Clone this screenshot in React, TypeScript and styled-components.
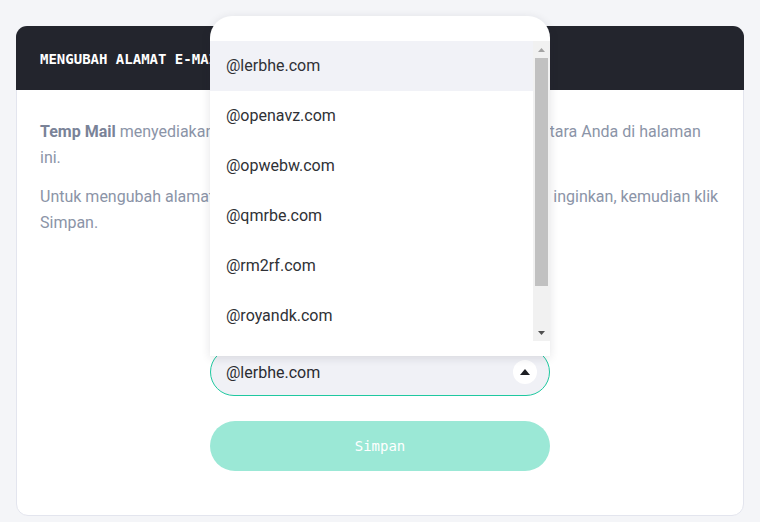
import React from 'react';
import styled, { createGlobalStyle } from 'styled-components';

const GlobalStyle = createGlobalStyle`
    html, body {
        margin: 0;
        padding: 0;
        background: #f4f5f8;
    }
    body {
        font-family: Roboto, "Liberation Sans", sans-serif;
    }
    * {
        box-sizing: border-box;
    }
`;

const domains = [
    '@lerbhe.com',
    '@openavz.com',
    '@opwebw.com',
    '@qmrbe.com',
    '@rm2rf.com',
    '@royandk.com',
    '@tmmbt.net',
];

const ROW_H = 50;
const VISIBLE = 6;

const App: React.FC = () => {
    const selected = domains[0];
    // track between the two arrow buttons, thumb sized by visible share
    const track = VISIBLE * ROW_H - 34;
    const thumb = Math.round((track * VISIBLE) / domains.length);

    return (
        <Page>
            <GlobalStyle />
            <Card>
                <Header>
                    <Title>MENGUBAH ALAMAT E-MAIL</Title>
                </Header>
                <Body>
                    <Intro>
                        <Paragraph>
                            <strong>Temp Mail</strong> menyediakan kemudahan buat mengatur alamat mail sementara Anda di halaman ini.
                        </Paragraph>
                        <Paragraph>
                            Untuk mengubah alamat mail isi nama baru dan pilih domain yang Anda inginkan, kemudian klik Simpan.
                        </Paragraph>
                    </Intro>
                    <Form>
                        <NameInput defaultValue="" placeholder="Nama e-mail" />
                        <SelectWrap>
                            <Dropdown>
                                <OptionList>
                                    {domains.map((d) => (
                                        <Option key={d} $active={d === selected}>{d}</Option>
                                    ))}
                                </OptionList>
                                <ScrollRail>
                                    <RailButton>
                                        <svg width="7" height="4" viewBox="0 0 7 4">
                                            <path d="M3.5 0 L7 4 L0 4 Z" fill="#a3a3a3" />
                                        </svg>
                                    </RailButton>
                                    <Thumb style={{ height: thumb }} />
                                    <RailSpacer />
                                    <RailButton>
                                        <svg width="7" height="4" viewBox="0 0 7 4">
                                            <path d="M0 0 L7 0 L3.5 4 Z" fill="#505050" />
                                        </svg>
                                    </RailButton>
                                </ScrollRail>
                            </Dropdown>
                            <Select>
                                <span>{selected}</span>
                                <Toggle>
                                    <svg width="10" height="6" viewBox="0 0 10 6">
                                        <path d="M5 0 L10 6 L0 6 Z" fill="#1d1f24" />
                                    </svg>
                                </Toggle>
                            </Select>
                        </SelectWrap>
                        <SaveButton>Simpan</SaveButton>
                    </Form>
                </Body>
            </Card>
        </Page>
    );
};

const Page = styled.div`
    padding: 26px 16px 6px;
`;

const Card = styled.div`
    background: #ffffff;
    border: 1px solid #e3e5ee;
    border-radius: 12px;
`;

const Header = styled.div`
    height: 64px;
    background: #23252d;
    border-radius: 11px 11px 0 0;
    margin: -1px -1px 0;
    padding: 0 24px;
    display: flex;
    align-items: center;
`;

const Title = styled.h2`
    margin: 0;
    padding-top: 1px;
    color: #ffffff;
    font-family: "DejaVu Sans Mono", "Liberation Mono", monospace;
    font-weight: bold;
    font-size: 14px;
`;

const Body = styled.div`
    padding: 29px 22px 44px;
`;

const Intro = styled.div`
    padding-left: 1px;
`;

const Paragraph = styled.p`
    margin: 0 0 14px;
    font-size: 16px;
    line-height: 25.6px;
    color: #8b94a7;

    strong {
        color: #7a8398;
        font-weight: bold;
    }
`;

const Form = styled.div`
    width: 340px;
    margin: 40px auto 0;
    display: flex;
    flex-direction: column;
    gap: 25px;
`;

const NameInput = styled.input`
    height: 48px;
    border: 1px solid #e3e5ee;
    border-radius: 24px;
    background: #f0f1f6;
    padding: 0 16px;
    font-family: Roboto, sans-serif;
    font-size: 16px;
`;

const SelectWrap = styled.div`
    position: relative;
`;

const Select = styled.div`
    height: 48px;
    border: 1px solid #1fc8a0;
    border-radius: 24px;
    background: #f0f1f6;
    padding: 0 12px 0 15px;
    display: flex;
    align-items: center;
    justify-content: space-between;
    font-size: 16px;
    color: #2a2c31;
`;

const Toggle = styled.div`
    width: 24px;
    height: 24px;
    border-radius: 50%;
    background: #ffffff;
    display: flex;
    align-items: center;
    justify-content: center;
`;

const Dropdown = styled.div`
    position: absolute;
    left: 0;
    top: -332px;
    width: 340px;
    height: 340px;
    padding: 25px 0 15px;
    display: flex;
    background: #ffffff;
    border-radius: 22px 22px 0 0;
    box-shadow: 0 2px 10px rgba(30, 35, 50, 0.12);
    z-index: 2;
`;

const OptionList = styled.ul`
    flex: 1;
    list-style: none;
    margin: 0;
    padding: 0;
    height: ${VISIBLE * ROW_H}px;
    overflow: hidden;
`;

const Option = styled.li<{ $active?: boolean }>`
    height: ${ROW_H}px;
    line-height: ${ROW_H}px;
    padding: 0 16px;
    font-size: 16px;
    color: #2f3136;
    background: ${(p) => (p.$active ? '#f1f2f7' : '#ffffff')};
`;

const ScrollRail = styled.div`
    width: 17px;
    height: ${VISIBLE * ROW_H}px;
    background: #f1f1f1;
    display: flex;
    flex-direction: column;
`;

const RailButton = styled.div`
    height: 17px;
    display: flex;
    align-items: center;
    justify-content: center;
`;

const Thumb = styled.div`
    margin: 0 2px;
    background: #c1c1c1;
`;

const RailSpacer = styled.div`
    flex: 1;
`;

const SaveButton = styled.button`
    height: 50px;
    border: none;
    border-radius: 25px;
    background: #9be8d6;
    color: #ffffff;
    font-family: "DejaVu Sans Mono", "Liberation Mono", monospace;
    font-size: 14px;
    cursor: pointer;
`;

export default App;
